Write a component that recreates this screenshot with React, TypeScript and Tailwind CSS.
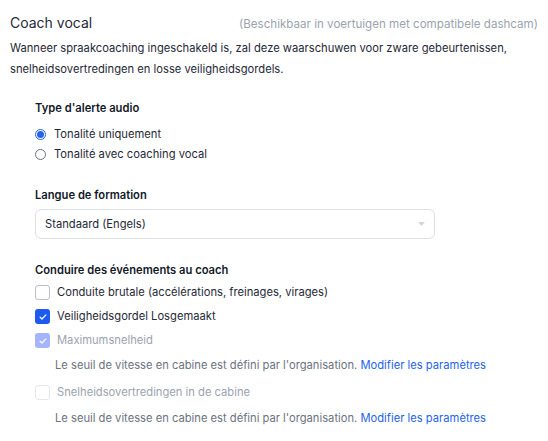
import React, { useState } from "react";

function Check({ checked, disabled }: { checked: boolean; disabled?: boolean }) {
  if (checked) {
    return (
      <span
        className={`flex size-[15px] shrink-0 items-center justify-center rounded-[3px] ${
          disabled ? "bg-[#a5b4fc]" : "bg-[#1d5bf0]"
        }`}
      >
        <svg viewBox="0 0 12 12" className="size-[10px]" fill="none">
          <path d="M2.5 6.2l2.2 2.2 4.8-4.9" stroke="white" strokeWidth="1.5" strokeLinecap="round" strokeLinejoin="round" />
        </svg>
      </span>
    );
  }
  return (
    <span
      className={`size-[15px] shrink-0 rounded-[3px] border ${
        disabled ? "border-[#e5e7eb]" : "border-[#b9bec7]"
      } bg-white`}
    />
  );
}

function Radio({ checked }: { checked: boolean }) {
  return checked ? (
    <span className="flex size-[11px] shrink-0 items-center justify-center rounded-full border border-[#2563eb]">
      <span className="size-[7px] rounded-full bg-[#2563eb]" />
    </span>
  ) : (
    <span className="size-[11px] shrink-0 rounded-full border border-[#6b7280] bg-white" />
  );
}

export default function App() {
  const [tone, setTone] = useState("only");
  return (
    <div
      className="h-[441px] w-[548px] bg-white px-[10px] pt-[12px] text-[#1f2937]"
      style={{ fontFamily: "Inter, 'Noto Sans', sans-serif" }}
    >
      <div className="flex items-baseline justify-between">
        <h2 className="text-[14px] text-[#1f2937]">Coach vocal</h2>
        <span className="text-[11.6px] text-[#9ca3af]">(Beschikbaar in voertuigen met compatibele dashcam)</span>
      </div>
      <p className="mt-[5px] text-[11.2px] leading-[21px] text-[#1f2937]">
        Wanneer spraakcoaching ingeschakeld is, zal deze waarschuwen voor zware gebeurtenissen,
        <br />
        snelheidsovertredingen en losse veiligheidsgordels.
      </p>

      <div className="pl-[25px] text-[11.2px]">
        <h3 className="mt-[20px] font-semibold text-[#111827]">Type d'alerte audio</h3>
        <div className="mt-[9px] flex flex-col gap-[4px]">
          <label className="flex h-[16px] items-center gap-[8px]" onClick={() => setTone("only")}>
            <Radio checked={tone === "only"} />
            <span>Tonalité uniquement</span>
          </label>
          <label className="flex h-[16px] items-center gap-[8px]" onClick={() => setTone("voice")}>
            <Radio checked={tone === "voice"} />
            <span>Tonalité avec coaching vocal</span>
          </label>
        </div>

        <h3 className="mt-[25px] font-semibold text-[#111827]">Langue de formation</h3>
        <div className="mt-[5px] flex h-[30px] w-[400px] items-center justify-between rounded-[6px] border border-[#dcdfe4] px-[9px]">
          <span>Standaard (Engels)</span>
          <svg viewBox="0 0 10 6" className="h-[4px] w-[7px]">
            <path d="M0 0h10L5 6z" fill="#d1d5db" />
          </svg>
        </div>

        <h3 className="mt-[23px] font-semibold text-[#111827]">Conduire des événements au coach</h3>
        <div className="mt-[2px] flex flex-col">
          <label className="flex h-[24px] items-center gap-[7px]">
            <Check checked={false} />
            <span>Conduite brutale (accélérations, freinages, virages)</span>
          </label>
          <label className="flex h-[24px] items-center gap-[7px]">
            <Check checked />
            <span>Veiligheidsgordel Losgemaakt</span>
          </label>
          <label className="flex h-[24px] items-center gap-[7px] text-[#9ca3af]">
            <Check checked disabled />
            <span>Maximumsnelheid</span>
          </label>
          <p className="mt-[4px] pl-[20px] text-[#6b7280]">
            Le seuil de vitesse en cabine est défini par l'organisation.{" "}
            <a className="text-[#2563eb]">Modifier les paramètres</a>
          </p>
          <label className="mt-[7px] flex h-[24px] items-center gap-[7px] text-[#9ca3af]">
            <Check checked={false} disabled />
            <span>Snelheidsovertredingen in de cabine</span>
          </label>
          <p className="mt-[5px] pl-[20px] text-[#6b7280]">
            Le seuil de vitesse en cabine est défini par l'organisation.{" "}
            <a className="text-[#2563eb]">Modifier les paramètres</a>
          </p>
        </div>
      </div>
    </div>
  );
}
